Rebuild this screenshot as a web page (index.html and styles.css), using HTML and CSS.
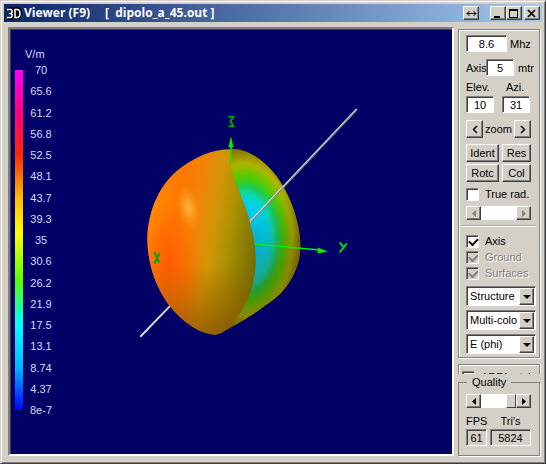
FILE: index.html
```html
<!DOCTYPE html>
<html lang="en">
<head>
<meta charset="utf-8">
<title>3D Viewer (F9)</title>
<link rel="stylesheet" href="styles.css">
</head>
<body>
<div class="window">
  <header class="titlebar">
    <svg class="logo" width="16" height="16" viewBox="0 0 16 16" aria-hidden="true">
      <path d="M2 4h3l2 1v2l-2 1H3M5 8l2 1v2l-2 2H2M10 4v8h1q3 0 3-4t-3-4z" fill="none" stroke="#000" stroke-width="4"/>
      <path d="M1 4.500h4l1 1v2l-1 1H3M5 8.500l1 1v2l-1 1H1" fill="none" stroke="#fff" stroke-width="1.500"/>
      <path d="M9 4.500h2q3 0 3 4t-3 4H9z" fill="none" stroke="#fff" stroke-width="1.500"/>
    </svg>
    <h1 class="title">Viewer (F9)<span class="file">[&nbsp; dipolo_a_45.out ]</span></h1>
    <button class="winbtn swap" aria-label="Resize"><svg width="11" height="7" viewBox="0 0 11 7"><path d="M1 3.5h9M3.5 1L1 3.5 3.5 6M7.500 1L10 3.500 7.500 6" fill="none" stroke="#000"/></svg></button>
    <div class="wingroup">
      <button class="winbtn" aria-label="Minimize"><svg width="10" height="9" viewBox="0 0 10 9"><path d="M1 7h6v2H1z"/></svg></button>
      <button class="winbtn" aria-label="Maximize"><svg width="10" height="9" viewBox="0 0 10 9"><path d="M0 0h9v9H0zM1 2v6h7V2z" fill-rule="evenodd"/></svg></button>
    </div>
    <button class="winbtn" aria-label="Close"><svg width="10" height="9" viewBox="0 0 10 9"><path d="M1 1l7 7M8 1L1 8" stroke="#000" stroke-width="1.700"/></svg></button>
  </header>
  <div class="content">
    <main class="view">
      <svg class="scene" viewBox="11 30 441 422" preserveAspectRatio="xMinYMin meet" role="img" aria-label="Radiation pattern">
        <defs>
          <linearGradient id="outer" gradientUnits="userSpaceOnUse" x1="148" y1="235" x2="256" y2="252">
            <stop offset="0" stop-color="#ff8c00"/><stop offset=".22" stop-color="#ff7600"/><stop offset=".42" stop-color="#f08406"/><stop offset=".6" stop-color="#cf9608"/><stop offset=".76" stop-color="#a89000"/><stop offset=".9" stop-color="#8a7c00"/><stop offset="1" stop-color="#757000"/>
          </linearGradient>
          <linearGradient id="shade" x1="0" y1="0" x2="0" y2="1">
            <stop offset=".62" stop-color="#a05000" stop-opacity="0"/><stop offset="1" stop-color="#885000" stop-opacity=".75"/>
          </linearGradient>
          <radialGradient id="red" gradientUnits="userSpaceOnUse" cx="0" cy="0" r="1" gradientTransform="translate(170 265) rotate(-6) scale(33 60)">
            <stop offset="0" stop-color="#ff5c00"/><stop offset="1" stop-color="#ff6400" stop-opacity="0"/>
          </radialGradient>
          <radialGradient id="shine" gradientUnits="userSpaceOnUse" cx="0" cy="0" r="1" gradientTransform="translate(189 208) rotate(-12) scale(12 24)">
            <stop offset="0" stop-color="#ffb43c"/><stop offset=".4" stop-color="#ffa42c" stop-opacity=".7"/><stop offset="1" stop-color="#ff9010" stop-opacity="0"/>
          </radialGradient>
          <radialGradient id="inner" gradientUnits="userSpaceOnUse" cx="0" cy="0" r="1" gradientTransform="translate(245 240) scale(56 89)">
            <stop offset="0" stop-color="#00b8e8"/><stop offset=".4" stop-color="#00d0ec"/><stop offset=".5" stop-color="#08d8c0"/><stop offset=".6" stop-color="#20cc50"/><stop offset=".7" stop-color="#50cc00"/><stop offset=".85" stop-color="#b0b400"/><stop offset="1" stop-color="#8e7400"/>
          </radialGradient>
          <linearGradient id="dim" gradientUnits="userSpaceOnUse" x1="255" y1="215" x2="295" y2="255">
            <stop offset="0" stop-color="#302800" stop-opacity="0"/><stop offset="1" stop-color="#302800" stop-opacity=".3"/>
          </linearGradient>
          <path id="back" d="M231 150C240 149 247 152 256 157C272 167 285 185 293 207C300 226 303 246 299 262C295 277 286 291 274 300C262 309 247 320 220 334Z"/>
          <path id="front" d="M231 150C212 150 194 158 177 172C158 189 149 213 148 238C148 264 156 287 170 306C184 323 200 334 216 335C226 334 238 320 247 302C258 278 259 254 251 225C247 207 236 186 231 165Z"/>
        </defs>
        <path class="wire" d="M141 337L171 306"/>
        <use href="#back" fill="url(#inner)"/><use href="#back" fill="url(#dim)"/>
        <path class="wire" d="M250 223L357 110"/>
        <path class="wire-shade" d="M251 223L357 111"/>
        <use href="#front" fill="url(#outer)"/><use href="#front" fill="url(#red)"/><use href="#front" fill="url(#shade)"/><use href="#front" fill="url(#shine)"/>
        <path class="axis-line" d="M231.500 163V145M255 244.500L320 250.500"/>
        <path class="arrow" d="M231.500 137L234 148H229zM328 252L318 248V254z"/>
        <path class="mark-dark" d="M229 117.500H234L231 122 234 127H229M155 253L160 263M160 254L155 264"/>
        <path class="mark" d="M340 243L344 248M347 244L340 253"/>
      </svg>
      <div class="legend">
        <div class="unit">V/m</div>
        <div class="scale">
          <div class="ramp"></div>
          <div class="ticks"><span>70</span><span>65.6</span><span>61.2</span><span>56.8</span><span>52.5</span><span>48.1</span><span>43.7</span><span>39.3</span><span>35</span><span>30.6</span><span>26.2</span><span>21.9</span><span>17.5</span><span>13.1</span><span>8.74</span><span>4.37</span><span>8e-7</span></div>
        </div>
      </div>
    </main>
    <aside class="side">
      <section class="panel controls">
        <div class="row freq"><input id="mhz" class="field" value="8.6"><label for="mhz">Mhz</label></div>
        <div class="row axis"><label for="len">Axis</label><input id="len" class="field" value="5" aria-describedby="mtr"><span id="mtr">mtr</span></div>
        <div class="angles"><label for="el">Elev.</label><label for="az">Azi.</label><input id="el" class="field" value="10"><input id="az" class="field" value="31"></div>
        <div class="row zoom"><button class="btn" aria-label="Zoom out"><svg width="6" height="9" viewBox="0 0 6 9"><path d="M5 1L1.500 4.500 5 8" fill="none" stroke="#000" stroke-width="1.500"/></svg></button><span>zoom</span><button class="btn" aria-label="Zoom in"><svg width="6" height="9" viewBox="0 0 6 9"><path d="M1 1L4.500 4.500 1 8" fill="none" stroke="#000" stroke-width="1.500"/></svg></button></div>
        <div class="buttons"><button class="btn">Ident</button><button class="btn">Res</button><button class="btn">Rotc</button><button class="btn">Col</button></div>
        <label class="check"><input type="checkbox">True rad.</label>
        <div class="scroll off"><button class="step" disabled aria-label="Decrease"><svg width="4" height="7" viewBox="0 0 4 7"><path d="M4 0v7L0 3.500z"/></svg></button><input type="range" disabled aria-label="True radius"><button class="step" disabled aria-label="Increase"><svg width="4" height="7" viewBox="0 0 4 7"><path d="M0 0v7l4-3.500z"/></svg></button></div>
        <hr>
        <div class="checks">
          <label class="check"><input type="checkbox" checked>Axis</label>
          <label class="check dis"><input type="checkbox" checked disabled>Ground</label>
          <label class="check dis"><input type="checkbox" checked disabled>Surfaces</label>
        </div>
        <div class="selects">
          <div class="combo"><select aria-label="Structure"><option>Structure</option></select><span class="drop"></span></div>
          <div class="combo"><select aria-label="Colouring"><option>Multi-colo</option></select><span class="drop"></span></div>
          <div class="combo"><select aria-label="Component"><option>E (phi)</option></select><span class="drop"></span></div>
        </div>
      </section>
      <section class="panel clipped"><label class="check"><input type="checkbox">ARRL-style</label></section>
      <fieldset class="quality">
        <legend>Quality</legend>
        <div class="scroll"><button class="step" aria-label="Lower quality"><svg width="4" height="7" viewBox="0 0 4 7"><path d="M4 0v7L0 3.500z"/></svg></button><input type="range" value="100" aria-label="Quality"><button class="step" aria-label="Higher quality"><svg width="4" height="7" viewBox="0 0 4 7"><path d="M0 0v7l4-3.500z"/></svg></button></div>
        <div class="stats"><label for="fps">FPS</label><label for="tris">Tri's</label><output id="fps">61</output><output id="tris">5824</output></div>
      </fieldset>
    </aside>
  </div>
</div>
</body>
</html>
```
FILE: styles.css
```css
* { box-sizing: border-box; }

body {
  margin: 0;
  background: #d4d0c8;
  color: #000;
  font: 11px/16px "Liberation Sans", sans-serif;
}

button, input, select { font: inherit; color: inherit; margin: 0; }

.window {
  display: flex;
  flex-direction: column;
  min-height: 100vh;
  padding: 2px;
  border: 1px solid;
  border-color: #d4d0c8 #404040 #404040 #d4d0c8;
  box-shadow: inset 1px 1px #fff, inset -1px -1px #808080;
}

/* Title bar */
.titlebar {
  display: flex;
  align-items: center;
  height: 18px;
  margin: 1px;
  padding: 0 2px;
  background: linear-gradient(90deg, #0a246a, #a6caf0);
}
.logo { margin-right: 2px; }
.title {
  flex: 1;
  margin: 0;
  color: #fff;
  font: bold 12px/18px "Open Sans", "Noto Sans", sans-serif;
  white-space: nowrap;
}
.file { margin-left: 15px; }
.wingroup { display: flex; margin: 0 2px 0 11px; }
.winbtn, .btn, .step, .drop {
  display: flex;
  align-items: center;
  justify-content: center;
  padding: 0;
  background: #d4d0c8;
  border: 1px solid;
  border-color: #fff #404040 #404040 #fff;
  border-radius: 0;
  box-shadow: inset -1px -1px #808080;
}
.winbtn { width: 16px; height: 14px; }

/* Layout */
.content { display: flex; flex: 1; padding: 4px 3px 5px 5px; }
.view {
  position: relative;
  flex: 1;
  background: #000066;
  border: 2px solid;
  border-color: #808080 #fff #fff #808080;
  box-shadow: inset 1px 1px #404040;
  overflow: hidden;
}
.side { width: 82px; margin-left: 4px; padding-top: 2px; display: flex; flex-direction: column; }

/* Scene */
.scene { position: absolute; inset: 0; width: 100%; height: 100%; }
.wire { stroke: #d8d8d8; stroke-width: 2; }
.wire-shade { stroke: #777; stroke-width: 1; }
.axis-line { stroke: #00f000; stroke-width: 1.5; fill: none; }
.arrow { fill: #00f000; }
.mark, .mark-dark { fill: none; stroke: #00d800; stroke-width: 2; }
.mark-dark { stroke: #00a000; }

.legend { position: relative; width: 60px; padding: 17px 0 0 5px; color: #d8d8f8; }
.unit { padding-left: 10px; }
.scale { display: flex; align-items: center; height: 356px; }
.ramp {
  width: 8px;
  height: 340px;
  margin-right: 7px;
  background: linear-gradient(#f0f 0%, #ff0080 12%, #ff2800 25%, #ffc000 38%, #ff0 48%, #5f0 62%, #0ff 75%, #00b0ff 88%, #00f 100%);
}
.ticks { display: flex; flex-direction: column; justify-content: space-between; height: 100%; text-align: center; }

/* Panels */
.panel { border: 1px solid #808080; box-shadow: inset 1px 1px #fff, 1px 1px #fff; }
.controls { padding: 5px 3px 3px 7px; }
.row { display: flex; align-items: center; }
.field {
  width: 28px;
  height: 17px;
  padding: 0;
  text-align: center;
  background: #fff;
  border: 1px solid;
  border-color: #808080 #fff #fff #808080;
  border-radius: 0;
  box-shadow: inset 1px 1px #404040;
}
.freq .field { width: 41px; margin-right: 3px; }
.axis { margin-top: 7px; }
.axis label { width: 20px; }
.axis .field { margin-right: 4px; }
.angles { display: grid; grid-template-columns: 28px 28px; column-gap: 8px; margin-top: 2px; }
.angles label:nth-child(2) { padding-left: 4px; }
.angles label { line-height: 18px; }
.zoom { justify-content: space-between; margin-top: 7px; width: 65px; }
.zoom .btn { width: 17px; }
.btn { height: 18px; }
.buttons { display: grid; grid-template-columns: 33px 29px; gap: 2px 3px; margin-top: 6px; }
.check { display: flex; align-items: center; gap: 6px; height: 16px; white-space: nowrap; }
.buttons + .check { margin-top: 4px; }
.check input {
  appearance: none;
  flex: none;
  width: 13px;
  height: 13px;
  background: #fff;
  border: 1px solid;
  border-color: #808080 #fff #fff #808080;
  box-shadow: inset 1px 1px #404040;
}
.check input:checked::before {
  content: "";
  display: block;
  width: 7px;
  height: 4px;
  margin: 2px;
  border: solid #000;
  border-width: 0 0 2px 2px;
  transform: rotate(-45deg);
}
.check input:disabled { background: #d4d0c8; }
.check input:disabled::before { border-color: #808080; }
.dis { color: #808080; text-shadow: 1px 1px #fff; }

.scroll { display: flex; width: 65px; height: 14px; }
.controls .scroll { margin-top: 4px; }
.step { width: 15px; flex: none; }
.off svg { fill: #808080; }
.scroll input { appearance: none; flex: 1; min-width: 0; height: 14px; background: #fff; }
.scroll input::-webkit-slider-thumb {
  appearance: none;
  width: 10px;
  height: 14px;
  background: #d4d0c8;
  border: 1px solid;
  border-color: #fff #404040 #404040 #fff;
}
.off input::-webkit-slider-thumb { visibility: hidden; }
hr { margin: 5px 0 6px -4px; border: 0; border-top: 1px solid #b0aca4; border-bottom: 1px solid #fff; }

.selects { display: grid; gap: 4px; margin-top: 5px; }
.combo {
  position: relative;
  height: 20px;
  background: #fff;
  border: 1px solid;
  border-color: #808080 #fff #fff #808080;
  box-shadow: inset 1px 1px #404040;
}
.combo select {
  appearance: none;
  width: 51px;
  height: 18px;
  padding: 0 0 0 3px;
  border: 0;
  background: none;
  overflow: hidden;
  text-overflow: clip;
}
.drop { position: absolute; top: 1px; right: 1px; bottom: 0; width: 15px; pointer-events: none; }
.drop::before { content: ""; border: 4px solid transparent; border-top-color: #000; border-bottom: 0; }

.clipped { flex: none; height: 10px; margin-top: 6px; padding: 4px 3px; border-bottom: 0; box-shadow: inset 1px 1px #fff, 1px 0 #fff; overflow: hidden; }
.quality {
  flex: 1;
  min-width: 0;
  margin: 0;
  padding: 4px 7px 5px;
  border: 1px solid #808080;
  box-shadow: 1px 1px #fff;
}
.quality legend { margin-left: 1px; padding: 0 5px; background: #d4d0c8; }
.stats { display: grid; grid-template-columns: 21px 41px; column-gap: 3px; margin-top: 5px; text-align: center; }
.stats output { height: 17px; border: 1px solid; border-color: #808080 #fff #fff #808080; box-shadow: inset 1px 1px #404040; }
```
